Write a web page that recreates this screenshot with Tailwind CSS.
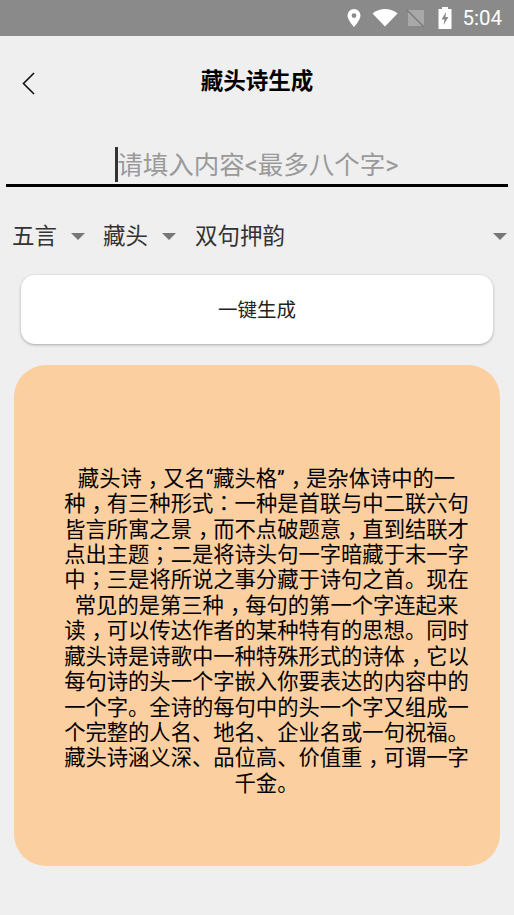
<!DOCTYPE html>
<html lang="zh"><head><meta charset="utf-8">
<script src="https://cdn.jsdelivr.net/npm/@tailwindcss/browser@4"></script>
</head>
<body class="m-0">
<div class="w-[514px] h-[915px] overflow-hidden bg-[#efefef] flex flex-col font-['Roboto','Noto_Sans_CJK_SC',sans-serif]">
  <div class="h-[36px] shrink-0 bg-[#8a8a8a] flex items-center justify-end pr-[12px] text-white">
    <svg class="w-[16px] h-[20px] mr-[10px]" viewBox="0 0 16 20"><path fill="#fff" fill-rule="evenodd" d="M8 1a6.500 6.500 0 0 0-6.500 6.500C1.500 12 8 19 8 19s6.500-7 6.500-11.500A6.500 6.500 0 0 0 8 1zm0 4.200a2.400 2.400 0 1 1 0 4.800 2.400 2.400 0 0 1 0-4.800z"/></svg>
    <svg class="w-[26px] h-[20px] mr-[8px]" viewBox="0 0 26 20"><path fill="#fff" d="M13 18.500 0.500 5.500C4 2.500 8.300 1 13 1s9 1.500 12.500 4.500z"/></svg>
    <svg class="w-[20px] h-[20px] mr-[12px]" viewBox="0 0 20 20"><path fill="#a8a8a8" d="M2 2h16v16H2z"/><path stroke="#7a7a7a" stroke-width="1.500" d="M1 2l17 17"/></svg>
    <svg class="w-[14px] h-[22px] mr-[10px]" viewBox="0 0 14 22"><path fill="#fff" fill-rule="evenodd" d="M4 0h6v2h3.500v20H.500V2H4zM8 5 3.500 12.500H6.500L5.500 18 10.500 10H7.500z"/></svg>
    <span class="text-[20.500px] leading-none">5:04</span>
  </div>
  <div class="h-[92px] shrink-0 relative flex items-center justify-center pb-[1px]">
    <svg class="absolute left-[21px] top-[35px] w-[16px] h-[24px]" viewBox="0 0 16 24"><path fill="none" stroke="#111" stroke-width="1.600" d="M13 2 2.500 12.500 13 23"/></svg>
    <span class="text-[22.500px] font-bold text-black leading-none">藏头诗生成</span>
  </div>
  <div class="mx-[6px] h-[59px] shrink-0 border-b-[3px] border-black flex items-center justify-center pt-[16px]">
    <span class="w-[3px] h-[35px] bg-[#333] -mr-[1px]"></span>
    <span class="text-[25.500px] leading-none text-[#9a9a9a] pt-[4px]">请填入内容&lt;最多八个字&gt;</span>
  </div>
  <div class="h-[48px] mt-[25px] shrink-0 flex items-center text-[22.500px] text-[#333] leading-none">
    <span class="ml-[12px]">五言</span>
    <svg class="w-[14px] h-[7px] ml-[14px]" viewBox="0 0 14 7"><path fill="#777" d="M0 0h14L7 7z"/></svg>
    <span class="ml-[18px]">藏头</span>
    <svg class="w-[14px] h-[7px] ml-[14px]" viewBox="0 0 14 7"><path fill="#777" d="M0 0h14L7 7z"/></svg>
    <span class="ml-[19px]">双句押韵</span>
    <svg class="w-[14px] h-[7px] ml-auto mr-[7px]" viewBox="0 0 14 7"><path fill="#777" d="M0 0h14L7 7z"/></svg>
  </div>
  <div class="mx-[21px] mt-[15px] h-[69px] shrink-0 rounded-[14px] bg-white shadow-[0_1px_3px_rgba(0,0,0,0.3)] flex items-center justify-center text-[19.500px] text-[#222] pt-[2px]">一键生成</div>
  <div class="mx-[14px] mt-[21px] h-[501px] shrink-0 rounded-[32px] bg-[#fbcfa0] flex items-center justify-center pt-[31px] pl-[19px]">
    <p class="w-[410px] text-[21.300px] leading-[25.400px] text-center text-black">藏头诗<span class="pl-[6px] -mr-[6px]">，</span>又名“藏头格”<span class="pl-[6px] -mr-[6px]">，</span>是杂体诗中的一种<span class="pl-[6px] -mr-[6px]">，</span>有三种形式<span lang="zh-Hant" class="font-['Noto_Sans_CJK_TC',sans-serif] leading-none">：</span>一种是首联与中二联六句皆言所寓之景<span class="pl-[6px] -mr-[6px]">，</span>而不点破题意<span class="pl-[6px] -mr-[6px]">，</span>直到结联才点出主题<span lang="zh-Hant" class="font-['Noto_Sans_CJK_TC',sans-serif] leading-none">；</span>二是将诗头句一字暗藏于末一字中<span lang="zh-Hant" class="font-['Noto_Sans_CJK_TC',sans-serif] leading-none">；</span>三是将所说之事分藏于诗句之首。现在常见的是第三种<span class="pl-[6px] -mr-[6px]">，</span>每句的第一个字连起来读<span class="pl-[6px] -mr-[6px]">，</span>可以传达作者的某种特有的思想。同时藏头诗是诗歌中一种特殊形式的诗体<span class="pl-[6px] -mr-[6px]">，</span>它以每句诗的头一个字嵌入你要表达的内容中的一个字。全诗的每句中的头一个字又组成一个完整的人名、地名、企业名或一句祝福。藏头诗涵义深、品位高、价值重<span class="pl-[6px] -mr-[6px]">，</span>可谓一字千金。</p>
  </div>
</div>
</body></html>
